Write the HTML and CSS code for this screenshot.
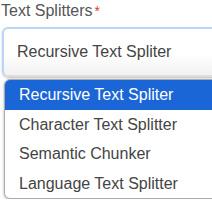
FILE: index.html
```html
<!DOCTYPE html>
<html lang="en">
<head>
  <meta charset="UTF-8">
  <meta name="viewport" content="width=device-width, initial-scale=1">
  <title>Text Splitters</title>
  <link rel="stylesheet" href="styles.css">
</head>
<body>
  <div class="field">
    <label class="label">Text Splitters<span class="req">*</span></label>
    <div class="select">Recursive Text Spliter</div>
    <ul class="menu">
      <li class="active">Recursive Text Spliter</li>
      <li>Character Text Splitter</li>
      <li>Semantic Chunker</li>
      <li>Language Text Splitter</li>
    </ul>
  </div>
</body>
</html>
```

FILE: styles.css
```css
body {
  margin: 0;
  background: #fff;
  font-family: "Liberation Sans", Arial, sans-serif;
  overflow: hidden;
}
.field {
  width: 240px;
  padding: 1px 0 0 1px;
}
.label {
  display: block;
  height: 24px;
  font-size: 16px;
  line-height: 20px;
  color: #555;
}
.req {
  color: #e53935;
  font-size: 14px;
  vertical-align: top;
  margin-left: 2px;
}
.select {
  height: 46px;
  margin: 2px 0 0 1px;
  padding-left: 13px;
  font-size: 16px;
  line-height: 46px;
  color: #444;
  background: linear-gradient(#fff 55%, #f1f1f1);
  border: 2px solid #b9d5f7;
  border-bottom: 2px solid #ddd;
  border-radius: 6px;
  box-shadow: 0 1px 2px rgba(0,0,0,0.25);
}
.menu {
  list-style: none;
  margin: 2px 0 0 3px;
  padding: 0;
  background: #fff;
  border: 1px solid #aaa;
  border-radius: 6px;
  overflow: hidden;
  box-shadow: 0 1px 3px rgba(0,0,0,0.3);
}
.menu li {
  height: 29.5px;
  line-height: 29px;
  padding-left: 14px;
  font-size: 16px;
  color: #444;
}
.menu li.active {
  background: #1b66d6;
  color: #fff;
}
```
